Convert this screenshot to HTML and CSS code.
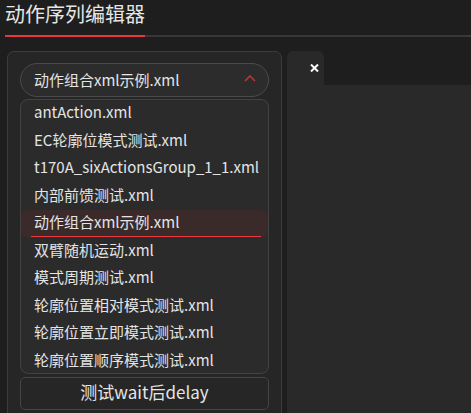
FILE: index.html
```html
<!DOCTYPE html>
<html lang="zh-CN">
<head>
    <meta charset="UTF-8">
    <title>动作序列编辑器</title>
    <link rel="stylesheet" href="styles.css">
</head>
<body>
    <header class="page-tabs">
        <h1 class="page-title">动作序列编辑器</h1>
    </header>

    <div class="workspace">
        <aside class="side-panel">
            <div class="file-select">
                <span class="file-select-value">动作组合xml示例.xml</span>
                <svg class="chevron" width="12" height="7" viewBox="0 0 12 7">
                    <polyline points="1,6 6,1 11,6" fill="none" stroke="#c8383c" stroke-width="1.3"/>
                </svg>
            </div>
            <ul class="file-list">
                <li class="file-item">antAction.xml</li>
                <li class="file-item">EC轮廓位模式测试.xml</li>
                <li class="file-item">t170A_sixActionsGroup_1_1.xml</li>
                <li class="file-item">内部前馈测试.xml</li>
                <li class="file-item selected">动作组合xml示例.xml</li>
                <li class="file-item">双臂随机运动.xml</li>
                <li class="file-item">模式周期测试.xml</li>
                <li class="file-item">轮廓位置相对模式测试.xml</li>
                <li class="file-item">轮廓位置立即模式测试.xml</li>
                <li class="file-item">轮廓位置顺序模式测试.xml</li>
            </ul>
            <button class="action-btn">测试wait后delay</button>
            <button class="action-btn"></button>
        </aside>

        <section class="editor">
            <div class="editor-tabs">
                <div class="editor-tab">
                    <svg class="tab-close" width="9" height="8" viewBox="0 0 9 8">
                        <path d="M1 0.5 L8 7.5 M8 0.5 L1 7.5" stroke="#ffffff" stroke-width="2"/>
                    </svg>
                </div>
            </div>
            <div class="editor-body"></div>
        </section>
    </div>
</body>
</html>
```

FILE: styles.css
```css
* {
    box-sizing: border-box;
    margin: 0;
    padding: 0;
    font-family: 'Noto Sans CJK SC', 'Noto Sans', sans-serif;
}

body {
    background-color: #1e1e1e;
    color: #e4e4e4;
    height: 413px;
    overflow: hidden;
}

.page-tabs {
    display: flex;
    margin-left: 5px;
    border-bottom: 2px solid #383838;
}

.page-title {
    font-size: 20px;
    font-weight: normal;
    line-height: 27px;
    padding-bottom: 8px;
    margin-bottom: -2px;
    border-bottom: 2px solid #e8383d;
    color: #e6e6e6;
}

.workspace {
    display: flex;
    gap: 5px;
    height: 376px;
    overflow: hidden;
    padding: 14px 0 0 7px;
}

.side-panel {
    width: 275px;
    height: 380px;
    flex-shrink: 0;
    display: flex;
    flex-direction: column;
    gap: 2px;
    padding: 11px 12px;
    background: #262626;
    border: 1px solid #3c3c3c;
    border-radius: 7px;
}

.file-select {
    height: 34px;
    flex-shrink: 0;
    display: flex;
    align-items: center;
    justify-content: space-between;
    padding: 0 12px 1px 13px;
    background: #2c2c2c;
    border: 1px solid #4a4a4a;
    border-radius: 17px;
    font-size: 15px;
}

.chevron {
    margin-top: -2px;
}

.file-list {
    list-style: none;
    height: 275px;
    flex-shrink: 0;
    overflow: hidden;
    background: #2b2b2b;
    border: 1px solid #424242;
    border-radius: 8px;
}

.file-item {
    position: relative;
    height: 27.5px;
    line-height: 23px;
    padding-left: 13px;
    font-size: 15px;
    white-space: nowrap;
}

.file-item.selected {
    background: #3b2a2a;
    border-radius: 8px;
}

.file-item.selected::after {
    content: '';
    position: absolute;
    left: 10px;
    right: 7px;
    bottom: 1px;
    height: 1px;
    background: #e8383d;
}

.action-btn {
    height: 33px;
    flex-shrink: 0;
    padding-bottom: 5px;
    background: #262626;
    color: #e4e4e4;
    border: 1px solid #454545;
    border-radius: 5px;
    font-size: 17px;
    margin-top: 1px;
}

.editor {
    flex: 1;
    display: flex;
    flex-direction: column;
}

.editor-tabs {
    display: flex;
}

.editor-tab {
    width: 37px;
    height: 34px;
    display: flex;
    align-items: center;
    padding-left: 23px;
    background: #292929;
    border-radius: 6px 6px 0 0;
}

.editor-body {
    flex: 1;
    background: #292929;
}
```
